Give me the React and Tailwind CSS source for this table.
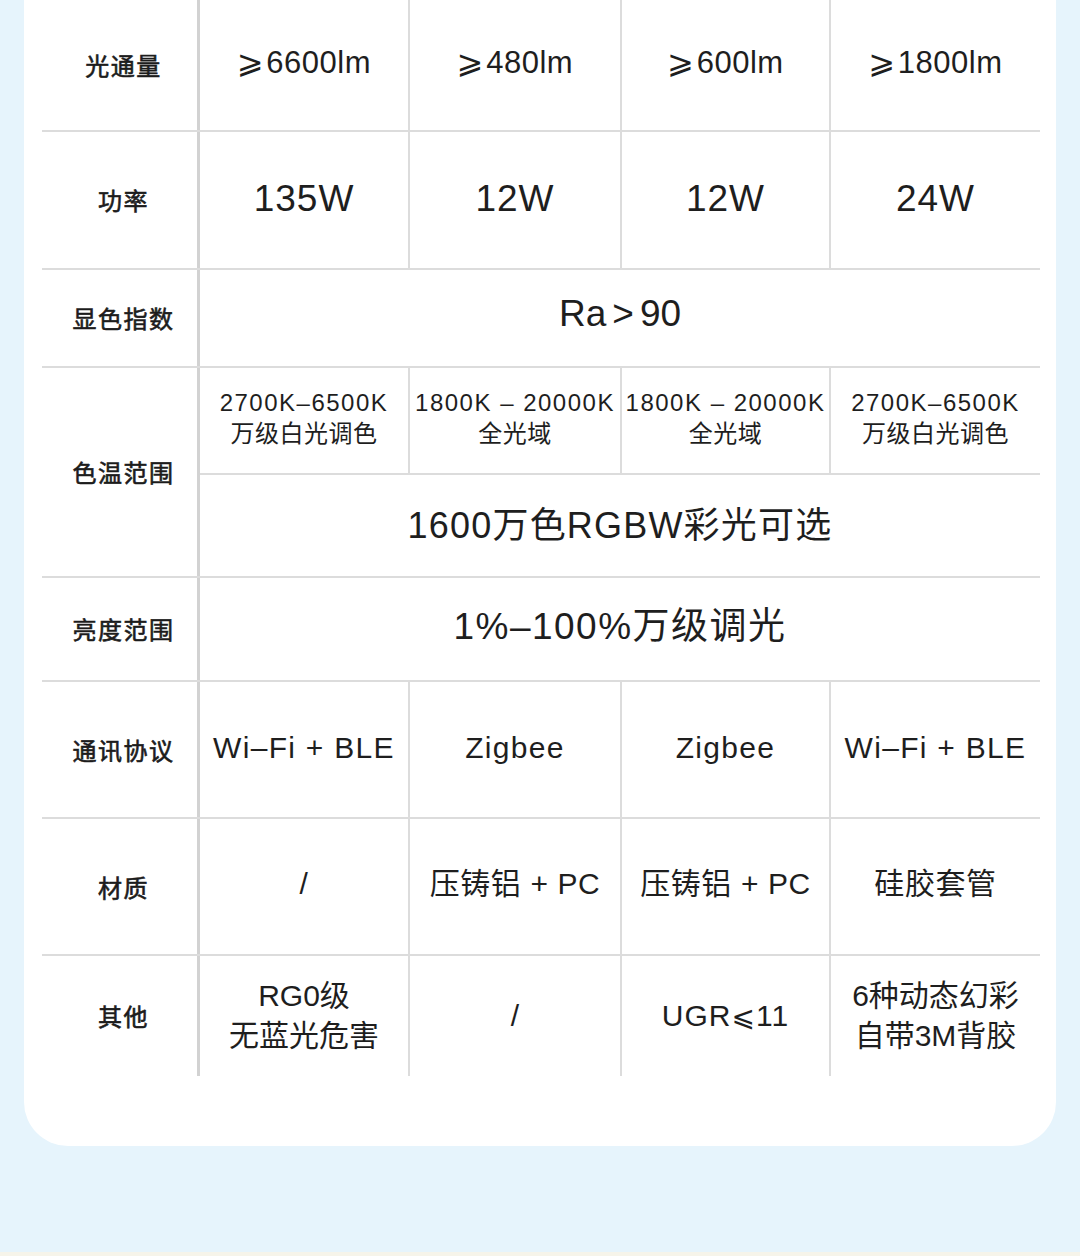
import React from "react";

const FONT = "font-['Liberation_Sans','Noto_Sans_CJK_SC',sans-serif]";

function Label({ children }) {
  return (
    <div className="w-[158px] shrink-0 h-full border-r-[3px] border-[#d2d2d2] flex items-center justify-center pl-[8px]">
      <span className="text-[24px] font-normal [-webkit-text-stroke:0.6px_#1c1c1c] text-[#1c1c1c] tracking-[1.5px] font-['Noto_Sans_CJK_SC',sans-serif] leading-none">
        {children}
      </span>
    </div>
  );
}

function Cells({ items, textClass = "" }) {
  const widths = ["w-[208px]", "w-[212px]", "w-[209px]", "w-[211px]"];
  return (
    <div className="flex h-full">
      {items.map((it, i) => (
        <div
          key={i}
          className={`${widths[i]} shrink-0 h-full flex items-center justify-center text-center ${
            i > 0 ? "border-l-2 border-[#dcdcdc]" : ""
          }`}
        >
          <div className={textClass}>{it}</div>
        </div>
      ))}
    </div>
  );
}

function Row({ h, label, children, last }) {
  return (
    <div className={`flex ${h} ${last ? "" : "border-b-2 border-[#dcdcdc]"}`}>
      <Label>{label}</Label>
      <div className="flex-1 h-full">{children}</div>
    </div>
  );
}

export default function App() {
  const ge = (n) => (
    <span>
      <span className="font-['DejaVu_Sans',sans-serif] text-[32px] leading-none mr-[2px]">⩾</span>
      {n}lm
    </span>
  );
  return (
    <div className={`w-[1080px] h-[1256px] bg-[#e6f4fc] flex flex-col ${FONT} text-[#1e1e1e]`}>
      <div className="ml-[24px] w-[1032px] bg-white rounded-b-[44px] pl-[18px] pr-[16px] pb-[70px]">
        <Row h="h-[132px]" label="光通量">
          <Cells
            items={[ge("6600"), ge("480"), ge("600"), ge("1800")]}
            textClass="text-[31px] tracking-[0.5px] -mt-[4px]"
          />
        </Row>
        <Row h="h-[138px]" label="功率">
          <Cells items={["135W", "12W", "12W", "24W"]} textClass="text-[37px] tracking-[1px] -mt-[2px]" />
        </Row>
        <Row h="h-[98px]" label="显色指数">
          <div className="h-full flex items-center justify-center text-[37px] -mt-[4px]">
            Ra<span className="mx-[6px]">&gt;</span>90
          </div>
        </Row>
        <Row h="h-[210px]" label="色温范围">
          <div className="h-full flex flex-col">
            <div className="h-[107px] border-b-2 border-[#dcdcdc]">
              <Cells
                items={[
                  <><span className="tracking-[1.5px]">2700K–6500K</span><br />万级白光调色</>,
                  <><span className="tracking-[1.5px]">1800K – 20000K</span><br />全光域</>,
                  <><span className="tracking-[1.5px]">1800K – 20000K</span><br />全光域</>,
                  <><span className="tracking-[1.5px]">2700K–6500K</span><br />万级白光调色</>,
                ]}
                textClass="text-[24px] leading-[31px] tracking-[0.5px] whitespace-nowrap -mt-[6px]"
              />
            </div>
            <div className="flex-1 flex items-center justify-center text-[36px] tracking-[1.2px]">
              1600万色RGBW彩光可选
            </div>
          </div>
        </Row>
        <Row h="h-[104px]" label="亮度范围">
          <div className="h-full flex items-center justify-center text-[37px] tracking-[1.5px] -mt-[2px]">
            1%–100%万级调光
          </div>
        </Row>
        <Row h="h-[137px]" label="通讯协议">
          <Cells
            items={["Wi–Fi + BLE", "Zigbee", "Zigbee", "Wi–Fi + BLE"]}
            textClass="text-[30px] tracking-[1.3px] whitespace-nowrap -mt-[4px]"
          />
        </Row>
        <Row h="h-[137px]" label="材质">
          <Cells
            items={["/", "压铸铝 + PC", "压铸铝 + PC", "硅胶套管"]}
            textClass="text-[30px] tracking-[0.6px] whitespace-nowrap -mt-[6px]"
          />
        </Row>
        <Row h="h-[120px]" label="其他" last>
          <Cells
            items={[
              <>RG0级<br />无蓝光危害</>,
              "/",
              <span className="tracking-[1px]">UGR<span className="font-['DejaVu_Sans',sans-serif] text-[28px] leading-none">⩽</span>11</span>,
              <>6种动态幻彩<br />自带3M背胶</>,
            ]}
            textClass="text-[30px] leading-[40px] whitespace-nowrap"
          />
        </Row>
      </div>
      <div className="flex-1" />
      <div className="h-[4px] bg-[#f6f4ea]" />
    </div>
  );
}
